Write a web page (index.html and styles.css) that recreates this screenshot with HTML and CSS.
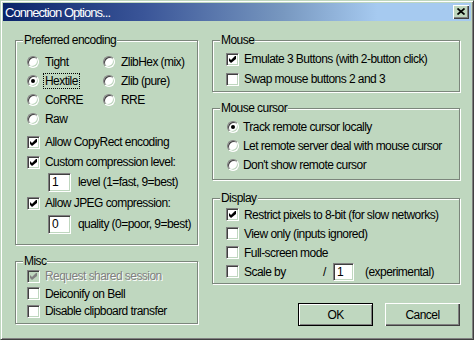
FILE: index.html
```html
<!DOCTYPE html>
<html>
<head>
<meta charset="utf-8">
<link rel="stylesheet" href="styles.css">
</head>
<body>
<div class="window">
  <div class="titlebar">
    <span class="title">Connection Options...</span>
    <span class="close"><svg width="8" height="7" viewBox="0 0 8 7"><path d="M0.5 0.5 L7.5 6.5 M7.5 0.5 L0.5 6.5" stroke="#000" stroke-width="1.7" fill="none"/></svg></span>
  </div>
  <div class="body">
    <div class="col left">
      <div class="group enc">
        <span class="legend">Preferred encoding</span>
        <div class="radio-grid">
          <div class="row"><span class="radio"></span><span class="lbl">Tight</span></div>
          <div class="row"><span class="radio"></span><span class="lbl">ZlibHex (mix)</span></div>
          <div class="row"><span class="radio on"></span><span class="lbl focus">Hextile</span></div>
          <div class="row"><span class="radio"></span><span class="lbl">Zlib (pure)</span></div>
          <div class="row"><span class="radio"></span><span class="lbl">CoRRE</span></div>
          <div class="row"><span class="radio"></span><span class="lbl">RRE</span></div>
          <div class="row"><span class="radio"></span><span class="lbl">Raw</span></div>
        </div>
        <div class="checks">
          <div class="row r20"><span class="check on"></span><span class="lbl">Allow CopyRect encoding</span></div>
          <div class="row r20"><span class="check on"></span><span class="lbl">Custom compression level:</span></div>
          <div class="row r20 sub"><span class="edit">1</span><span class="note">level (1=fast, 9=best)</span></div>
          <div class="row r20 gap1"><span class="check on"></span><span class="lbl">Allow JPEG compression:</span></div>
          <div class="row r20 gap1 sub"><span class="edit">0</span><span class="note">quality (0=poor, 9=best)</span></div>
        </div>
      </div>
      <div class="group misc">
        <span class="legend">Misc</span>
        <div class="row r18"><span class="check on disabled"></span><span class="lbl dis">Request shared session</span></div>
        <div class="row r17"><span class="check"></span><span class="lbl">Deiconify on Bell</span></div>
        <div class="row r18"><span class="check"></span><span class="lbl">Disable clipboard transfer</span></div>
      </div>
    </div>
    <div class="col right">
      <div class="group mouse">
        <span class="legend">Mouse</span>
        <div class="row r20"><span class="check on"></span><span class="lbl">Emulate 3 Buttons (with 2-button click)</span></div>
        <div class="row r20"><span class="check"></span><span class="lbl">Swap mouse buttons 2 and 3</span></div>
      </div>
      <div class="group cursor">
        <span class="legend">Mouse cursor</span>
        <div class="row"><span class="radio on"></span><span class="lbl">Track remote cursor locally</span></div>
        <div class="row"><span class="radio"></span><span class="lbl">Let remote server deal with mouse cursor</span></div>
        <div class="row"><span class="radio"></span><span class="lbl">Don't show remote cursor</span></div>
      </div>
      <div class="group display">
        <span class="legend">Display</span>
        <div class="row"><span class="check on"></span><span class="lbl">Restrict pixels to 8-bit (for slow networks)</span></div>
        <div class="row"><span class="check"></span><span class="lbl">View only (inputs ignored)</span></div>
        <div class="row"><span class="check"></span><span class="lbl">Full-screen mode</span></div>
        <div class="row"><span class="check"></span><span class="lbl scale">Scale by</span><span class="slash">/</span><span class="edit small">1</span><span class="exp">(experimental)</span></div>
      </div>
      <div class="buttons">
        <span class="btn default">OK</span>
        <span class="btn">Cancel</span>
      </div>
    </div>
  </div>
</div>
</body>
</html>
```
FILE: styles.css
```css
:root {
  --face: #bfd7bf;
  --shadow: #7c867c;
  --dark: #404040;
}
* { box-sizing: border-box; }
body {
  margin: 0;
  background: var(--face);
  font-family: "Liberation Sans", Arial, sans-serif;
  font-size: 12px;
  letter-spacing: -0.55px;
  color: #000;
}
.window {
  width: 474px;
  height: 340px;
  background: var(--face);
  border: 1px solid;
  border-color: var(--face) var(--dark) var(--dark) var(--face);
  box-shadow: inset 1px 1px #fff, inset -1px -1px #808080;
  padding: 2px;
}
.titlebar {
  height: 18px;
  background: linear-gradient(to right, #0a246a 0%, #3a5598 30%, #7898c0 60%, #a6caf0 80%, #a6caf0 100%);
  display: flex;
  align-items: center;
  justify-content: space-between;
  padding: 0 2px;
  color: #fff;
}
.title {
  font-size: 13px;
  letter-spacing: -0.95px;
  line-height: 18px;
  padding-top: 1px;
}
.close {
  width: 16px;
  height: 14px;
  background: var(--face);
  box-shadow: inset 1px 1px #fff, inset -1px -1px var(--dark), inset -2px -2px #808080;
  display: flex;
  align-items: center;
  justify-content: center;
  padding-bottom: 1px;
}
.close svg { display: block; }
.body {
  display: flex;
  gap: 14px;
  padding: 19px 0 0 12px;
}
.col { display: flex; flex-direction: column; }
.left { width: 183px; }
.right { width: 248px; }
.group {
  position: relative;
  border: 1px solid var(--shadow);
  box-shadow: inset 1px 1px #fff, 1px 1px #fff;
}
.legend {
  position: absolute;
  top: -8px;
  left: 7px;
  padding: 0 1px;
  background: var(--face);
  line-height: 14px;
}
.row {
  display: flex;
  align-items: center;
  height: 19px;
  white-space: nowrap;
}
.r20 { height: 20px; }
.r18 { height: 18px; }
.r17 { height: 17px; }
.gap1 { margin-top: 1px; }
.lbl {
  padding: 0 1px;
  border: 1px solid transparent;
  line-height: 14px;
}
.lbl.focus { border: 1px dotted #000; }
.lbl.dis { color: #808080; text-shadow: 1px 1px #fff; }

.radio {
  width: 12px;
  height: 12px;
  flex: none;
  border-radius: 50%;
  background: #fff;
  border: 1px solid;
  border-color: #808080 #fff #fff #808080;
  box-shadow: inset 1px 1px var(--dark), inset -1px -1px var(--face);
  position: relative;
  margin-right: 4px;
}
.radio.on::after {
  content: "";
  position: absolute;
  left: 3px;
  top: 3px;
  width: 4px;
  height: 4px;
  border-radius: 50%;
  background: #000;
}
.check {
  width: 13px;
  height: 13px;
  flex: none;
  background: #fff;
  border: 1px solid;
  border-color: #808080 #fff #fff #808080;
  box-shadow: inset 1px 1px var(--dark), inset -1px -1px var(--face);
  margin-right: 3px;
  position: relative;
}
.check.on::after {
  content: "";
  position: absolute;
  left: 2px;
  top: 2px;
  width: 7px;
  height: 7px;
  background: no-repeat center / 7px 7px url("data:image/svg+xml,%3Csvg xmlns='http://www.w3.org/2000/svg' width='7' height='7' viewBox='0 0 7 7'%3E%3Cpath d='M0 2 L2 4 L6 0 L7 0 L7 3 L2 7 L0 5 Z' fill='%23000'/%3E%3C/svg%3E");
}
.check.disabled { background: var(--face); }
.check.disabled::after {
  background-image: url("data:image/svg+xml,%3Csvg xmlns='http://www.w3.org/2000/svg' width='7' height='7' viewBox='0 0 7 7'%3E%3Cpath d='M0 2 L2 4 L6 0 L7 0 L7 3 L2 7 L0 5 Z' fill='%23808080'/%3E%3C/svg%3E");
}
.edit {
  width: 23px;
  height: 19px;
  flex: none;
  background: #fff;
  border: 1px solid;
  border-color: #808080 #fff #fff #808080;
  box-shadow: inset 1px 1px var(--dark), inset -1px -1px var(--face);
  display: flex;
  align-items: center;
  padding: 0 0 0 3px;
  line-height: 14px;
}
.edit.small { width: 21px; height: 18px; }

/* Preferred encoding */
.enc { height: 205px; padding: 11px 0 0 11px; }
.radio-grid {
  display: grid;
  grid-template-columns: 76px auto;
  grid-auto-rows: 19px;
}
.checks { margin-top: 4px; }
.sub { padding-left: 21px; }
.note { margin-left: 7px; line-height: 14px; }

/* Misc */
.misc { height: 63px; margin-top: 16px; padding: 5px 0 0 11px; }

/* Right column */
.mouse { height: 52px; padding: 8px 0 0 13px; }
.cursor { height: 72px; margin-top: 16px; padding: 8px 0 0 14px; }
.cursor .radio { margin-right: 2px; }
.display { height: 86px; margin-top: 18px; padding: 6px 0 0 13px; }
.scale { width: 81px; }
.slash { width: 10px; }
.exp { margin-left: 11px; }

.buttons {
  display: flex;
  justify-content: flex-end;
  gap: 12px;
  margin-top: 19px;
}
.btn {
  width: 75px;
  height: 23px;
  display: flex;
  align-items: center;
  justify-content: center;
  background: var(--face);
  box-shadow: inset 1px 1px #fff, inset -1px -1px var(--dark), inset -2px -2px #808080;
  line-height: 14px;
}
.btn.default {
  border: 1px solid #000;
  box-shadow: inset 1px 1px #fff, inset -1px -1px #808080;
}
```
